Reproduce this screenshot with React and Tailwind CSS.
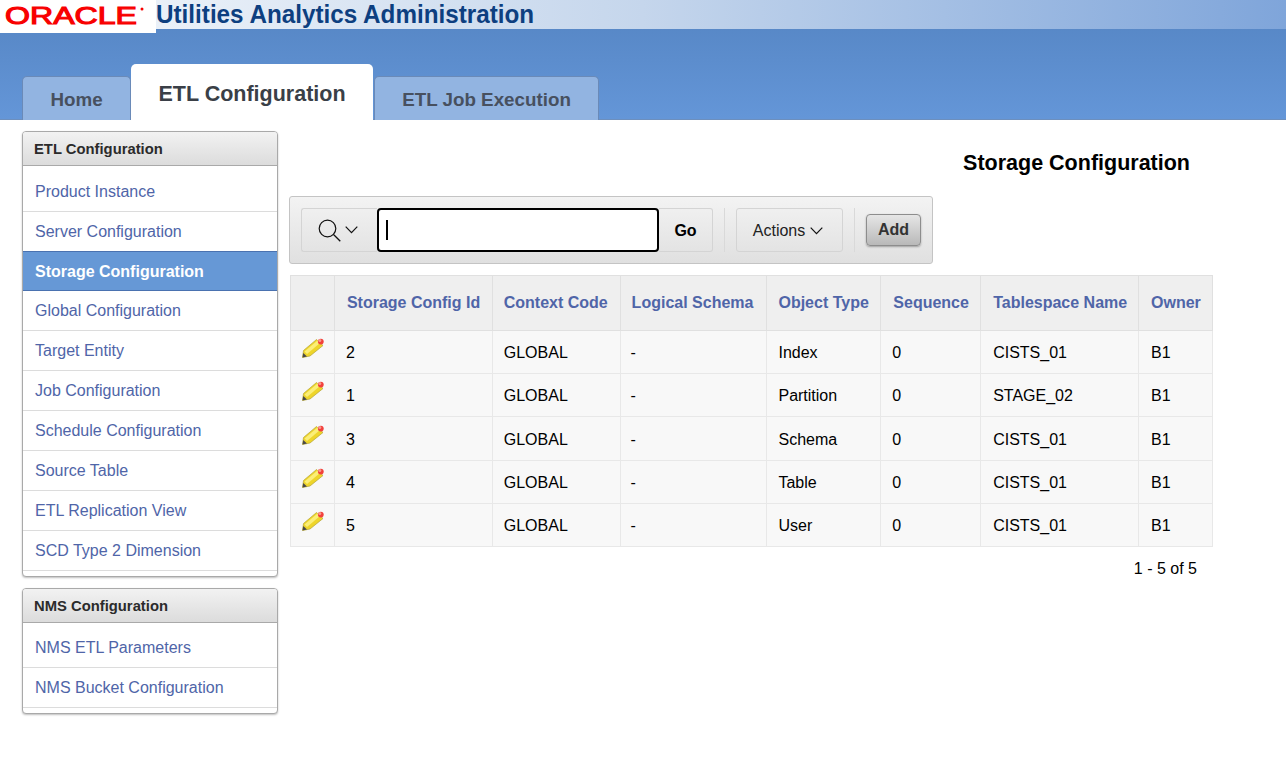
import React from "react";

const etlLinks = [
  "Product Instance",
  "Server Configuration",
  "Storage Configuration",
  "Global Configuration",
  "Target Entity",
  "Job Configuration",
  "Schedule Configuration",
  "Source Table",
  "ETL Replication View",
  "SCD Type 2 Dimension",
];

const nmsLinks = ["NMS ETL Parameters", "NMS Bucket Configuration"];

const columns = [
  { label: "Storage Config Id", width: "w-[158px] pl-[12px]" },
  { label: "Context Code", width: "w-[128px] pl-[11px]" },
  { label: "Logical Schema", width: "w-[147px] pl-[11px]" },
  { label: "Object Type", width: "w-[114px] pl-[11px]" },
  { label: "Sequence", width: "w-[100px] pl-[12px]" },
  { label: "Tablespace Name", width: "w-[158px] pl-[12px]" },
  { label: "Owner", width: "w-[74px] pl-[12px]" },
];

const rows = [
  { id: "2", type: "Index", space: "CISTS_01", h: "h-[43px]" },
  { id: "1", type: "Partition", space: "STAGE_02", h: "h-[43px]" },
  { id: "3", type: "Schema", space: "CISTS_01", h: "h-[44px]" },
  { id: "4", type: "Table", space: "CISTS_01", h: "h-[43px]" },
  { id: "5", type: "User", space: "CISTS_01", h: "h-[43px]" },
];

const OracleLogo = () => (
  <svg width="150" height="30" viewBox="0 0 150 30" className="block overflow-visible">
    <text
      x="5"
      y="24"
      textLength="132"
      lengthAdjust="spacingAndGlyphs"
      fontFamily="'Liberation Sans', sans-serif"
      fontSize="24"
      fontWeight="400"
      fill="#f80000"
      stroke="#f80000"
      strokeWidth="1.1"
    >
      ORACLE
    </text>
    <circle cx="142" cy="9" r="1.5" fill="#f80000" />
  </svg>
);

const Pencil = () => (
  <svg width="24" height="22" viewBox="0 0 24 22" className="block">
    <path d="M1.5 20.5 L2.5 13.5 L15.5 2.5 L22 8.5 L9 19 Z" fill="#eed52a" stroke="#b5a334" strokeWidth="0.7" />
    <path d="M3.5 14.5 L16.5 3.5 L19 6 L6 17 Z" fill="#fbee78" />
    <path d="M1.5 20.5 L2.2 16 L6 19.6 Z" fill="#4a4a4a" />
    <circle cx="19.8" cy="4.6" r="2.9" fill="#f2403c" />
    <circle cx="18.8" cy="3.5" r="1.5" fill="#f79a8e" />
  </svg>
);

const Chevron = () => (
  <svg width="13" height="8" viewBox="0 0 13 8" className="block">
    <path d="M0.7 0.7 L6.5 6.7 L12.3 0.7" fill="none" stroke="#111" strokeWidth="1.2" />
  </svg>
);

const SearchIcon = () => (
  <svg width="23" height="23" viewBox="0 0 23 23" className="block">
    <circle cx="9.5" cy="9.5" r="8.3" fill="none" stroke="#111" strokeWidth="1.2" />
    <path d="M15.5 15.5 L22.3 22.3" fill="none" stroke="#111" strokeWidth="1.3" />
  </svg>
);

const NavPanel = ({ title, links, listClass }) => (
  <div className="w-[256px] rounded-[4px] border border-[#a9a9a9] bg-white shadow-[0_1px_2px_rgba(0,0,0,0.25)] overflow-hidden">
    <div className="h-[34px] px-[11px] pt-[2px] flex items-center border-b border-[#a9a9a9] bg-gradient-to-b from-[#f2f2f2] to-[#dcdcdc] text-[14.8px] font-bold text-[#2b2b2b]">
      {title}
    </div>
    <ul className={listClass}>
      {links.map((link) => {
        const active = link === "Storage Configuration";
        return (
          <li
            key={link}
            className={`h-[40px] px-[12px] flex items-center text-[16px] ${
              active
                ? "bg-[#6698d6] border-y border-[#4a72b0] -mt-px pt-[2px] font-bold text-white"
                : "border-b border-[#dcdcdc] text-[#4f65a8]"
            }`}
          >
            {link}
          </li>
        );
      })}
    </ul>
  </div>
);

const Tab = ({ label, active, className }) =>
  active ? (
    <div className={`h-[56px] rounded-t-[5px] bg-white flex justify-center pt-[15px] text-[21.5px] leading-[30px] font-bold text-[#3a3f47] ${className}`}>
      {label}
    </div>
  ) : (
    <div className={`h-[44px] rounded-t-[5px] border border-b-0 border-[#6a8ab8] bg-[#92b4e1] flex items-center justify-center pt-[3px] text-[18.8px] font-bold text-[#47505f] ${className}`}>
      {label}
    </div>
  );

export default function App() {
  return (
    <div className="h-[761px] overflow-hidden bg-white font-['Liberation_Sans',Arial,sans-serif] text-black">
      {/* banner */}
      <div className="relative h-[120px] bg-gradient-to-b from-[#5484c2] to-[#6496d8] border-b border-[#6d8fbd]">
        <div className="h-[29px] pl-[156px] bg-gradient-to-r from-[#f6f9fc] via-[#c5d6ec] to-[#7fa5da] flex items-center">
          <span className="text-[25px] font-bold text-[#0d3f80] leading-[29px] scale-x-[0.97] origin-left whitespace-nowrap">
            Utilities Analytics Administration
          </span>
        </div>
        <div className="absolute left-0 top-0 w-[156px] h-[33px] bg-white">
          <OracleLogo />
        </div>
        <div className="absolute left-[22px] -bottom-px flex items-end">
          <Tab label="Home" className="w-[109px]" />
          <Tab label="ETL Configuration" active className="w-[242px]" />
          <Tab label="ETL Job Execution" className="w-[225px] ml-[1px]" />
        </div>
      </div>

      <div className="flex pl-[22px] pt-[11px]">
        {/* sidebar */}
        <div className="flex flex-col gap-[11px]">
          <NavPanel title="ETL Configuration" links={etlLinks} listClass="pt-[6px] pb-[5px]" />
          <NavPanel title="NMS Configuration" links={nmsLinks} listClass="pt-[5px] pb-[5px]" />
        </div>

        {/* main */}
        <div className="ml-[11px] w-[924px]">
          <div className="h-[65px] pr-[23px] pt-[20px] text-right text-[21.5px] leading-[24px] font-bold">
            Storage Configuration
          </div>

          <div className="w-[644px] h-[68px] rounded-[3px] border border-[#c4c4c4] bg-gradient-to-b from-[#f3f3f3] to-[#e0e0e0] flex items-center pl-[11px]">
            <div className="w-[76px] h-[44px] rounded-l-[3px] border border-[#d4d4d4] border-r-0 flex items-center justify-center gap-[4px] pr-[4px]">
              <SearchIcon />
              <Chevron />
            </div>
            <div className="w-[282px] h-[44px] rounded-[4px] border-2 border-black bg-white flex items-center pl-[7px]">
              <div className="w-[2px] h-[20px] bg-black" />
            </div>
            <div className="w-[54px] h-[44px] rounded-r-[3px] border border-[#d4d4d4] border-l-0 flex items-center justify-center pt-px text-[16px] font-bold">
              Go
            </div>
            <div className="ml-[11px] w-px h-[44px] bg-[#d9d9d9]" />
            <div className="ml-[11px] w-[107px] h-[44px] rounded-[3px] border border-[#d4d4d4] flex items-center justify-center gap-[5px] pr-[3px] pt-px text-[16px] text-[#222]">
              Actions
              <Chevron />
            </div>
            <div className="ml-[11px] w-px h-[44px] bg-[#d9d9d9]" />
            <div className="ml-[11px] w-[55px] h-[32px] rounded-[4px] border border-[#8d8d8d] bg-gradient-to-b from-[#e6e6e6] to-[#b9b9b9] shadow-[0_1px_2px_rgba(0,0,0,0.3)] flex items-center justify-center pb-[1px] text-[16px] font-bold text-[#333]">
              Add
            </div>
          </div>

          <table className="mt-[11px] ml-px table-fixed border-collapse text-[16px]">
            <thead>
              <tr className="h-[55px] bg-[#efefef] text-[#4f65a8]">
                <th className="w-[44px] border border-[#e0e0e0]" />
                {columns.map((col) => (
                  <th key={col.label} className={`${col.width} border border-[#e0e0e0] text-left font-bold whitespace-nowrap`}>
                    {col.label}
                  </th>
                ))}
              </tr>
            </thead>
            <tbody>
              {rows.map((row) => (
                <tr key={row.id} className={`${row.h} bg-[#f8f8f8]`}>
                  <td className="border border-[#e8e8e8] pl-[10px] pb-[8px]">
                    <Pencil />
                  </td>
                  <td className="border border-[#e8e8e8] pl-[11px] pt-[2px]">{row.id}</td>
                  <td className="border border-[#e8e8e8] pl-[11px] pt-[2px]">GLOBAL</td>
                  <td className="border border-[#e8e8e8] pl-[10px] pt-[2px]">-</td>
                  <td className="border border-[#e8e8e8] pl-[11px] pt-[2px]">{row.type}</td>
                  <td className="border border-[#e8e8e8] pl-[11px] pt-[2px]">0</td>
                  <td className="border border-[#e8e8e8] pl-[12px] pt-[2px]">{row.space}</td>
                  <td className="border border-[#e8e8e8] pl-[12px] pt-[2px]">B1</td>
                </tr>
              ))}
            </tbody>
          </table>

          <div className="w-[908px] pt-[12px] text-right text-[16px] leading-[20px]">1 - 5 of 5</div>
        </div>
      </div>
    </div>
  );
}
